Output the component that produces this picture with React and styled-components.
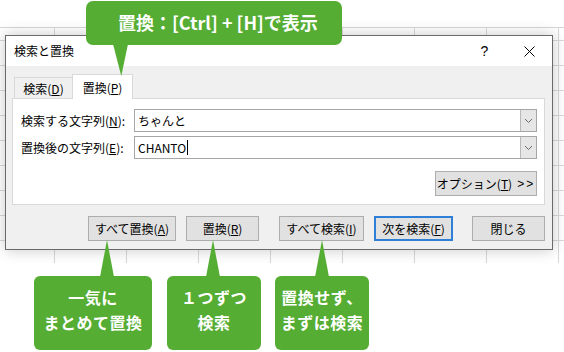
import React from "react";
import styled, { createGlobalStyle } from "styled-components";

const GREEN = "#55ad33";
const UI_FONT = `"Noto Sans CJK JP", "Noto Sans", sans-serif`;

const Global = createGlobalStyle`
  html, body { margin: 0; padding: 0; background: #fff; }
  body { font-family: ${UI_FONT}; }
  * { box-sizing: border-box; }
`;

const Stage = styled.div`
  position: relative;
  width: 564px;
  height: 352px;
  overflow: hidden;
  background: #fff;
  display: flex;
  flex-direction: column;
`;

const Sheet = styled.div`
  margin-top: 27px;
  height: 236px;
  border-top: 1px solid #d6d6d6;
  background-color: #fff;
  background-image:
    linear-gradient(to right, #d9d9d9 1px, transparent 1px),
    linear-gradient(to bottom, #d9d9d9 1px, transparent 1px);
  background-size: 72px 25px, 72px 25px;
  background-position: 54px 12px, 54px 12px;
  padding: 7px 0 0 5px;
`;

const Dialog = styled.div`
  width: 548px;
  height: 215px;
  border: 1px solid #6a6a6a;
  background: #f0f0f0;
  box-shadow: 0 0 14px rgba(0, 0, 0, 0.22);
  display: flex;
  flex-direction: column;
  font-family: ${UI_FONT};
  font-size: 12px;
  color: #000;
`;

const TitleBar = styled.div`
  height: 30px;
  background: #fff;
  display: flex;
  align-items: center;
  padding-left: 8px;
`;

const Title = styled.div`
  flex: 1;
  font-size: 12px;
  line-height: 30px;
`;

const TitleButton = styled.div`
  width: 45px;
  height: 30px;
  display: flex;
  align-items: center;
  justify-content: center;
  font-family: "Liberation Sans", sans-serif;
  font-size: 14px;
`;

const Body = styled.div`
  flex: 1;
  padding: 8px 7px 0 6px;
  display: flex;
  flex-direction: column;
`;

const TabRow = styled.div`
  height: 24px;
  display: flex;
  align-items: flex-end;
  padding-left: 2px;
  position: relative;
  z-index: 1;
`;

const Tab = styled.div`
  width: ${(p) => (p.$active ? 61 : 58)}px;
  height: ${(p) => (p.$active ? 25 : 21)}px;
  margin-bottom: ${(p) => (p.$active ? -1 : 0)}px;
  display: flex;
  align-items: center;
  justify-content: center;
  background: ${(p) => (p.$active ? "#fff" : "#f0f0f0")};
  border: 1px solid #d9d9d9;
  border-bottom: none;
  ${(p) => (p.$active ? "" : "border-right: none;")}
  padding-top: ${(p) => (p.$active ? 0 : 1)}px;
`;

const Panel = styled.div`
  height: 107px;
  background: #fff;
  border: 1px solid #d9d9d9;
  padding: 10px 7px 0 8px;
  display: flex;
  flex-direction: column;
`;

const FieldRow = styled.div`
  display: flex;
  align-items: center;
  height: 23px;
  margin-bottom: 4px;
`;

const Label = styled.div`
  width: 113px;
  font-size: 12px;
  white-space: nowrap;
`;

const Combo = styled.div`
  flex: 1;
  height: 23px;
  border: 1px solid #a6a6a6;
  display: flex;
  background: #fff;
`;

const ComboText = styled.div`
  flex: 1;
  padding-left: 3px;
  display: flex;
  align-items: center;
  font-size: 12px;
`;

const Caret = styled.span`
  display: inline-block;
  width: 1px;
  height: 15px;
  background: #000;
  margin-left: 1px;
`;

const ComboButton = styled.div`
  width: 16px;
  background: #e6e6e6;
  border-left: 1px solid #b9b9b9;
  display: flex;
  align-items: center;
  justify-content: center;
`;

const OptionRow = styled.div`
  display: flex;
  justify-content: flex-end;
  margin-top: 8px;
`;

const Arrows = styled.span`
  margin-left: 5px;
  letter-spacing: 2px;
  font-family: "Liberation Sans", sans-serif;
`;

const Button = styled.div`
  width: ${(p) => p.$w}px;
  height: 25px;
  margin-left: ${(p) => p.$ml || 0}px;
  background: #e1e1e1;
  border: ${(p) => (p.$default ? "2px solid #2f7fd6" : "1px solid #adadad")};
  display: flex;
  align-items: center;
  justify-content: center;
  font-size: 12px;
  white-space: nowrap;
`;

const ButtonRow = styled.div`
  display: flex;
  margin-top: 11px;
  padding-left: 76px;
`;

const Callout = styled.div`
  position: absolute;
  left: 86px;
  top: 1px;
  width: 256px;
  height: 44px;
  border-radius: 7px;
  background: ${GREEN};
  color: #fff;
  font-family: ${UI_FONT};
  font-weight: 700;
  font-size: 18px;
  display: flex;
  align-items: center;
  padding-left: 32px;
  padding-bottom: 3px;
  z-index: 5;
  &::after {
    content: "";
    position: absolute;
    left: 27px;
    top: 43px;
    width: 15px;
    height: 32px;
    background: ${GREEN};
    clip-path: polygon(0 0, 100% 0, 55% 100%);
  }
`;

const NoteRow = styled.div`
  display: flex;
  margin-top: 13px;
  padding-left: 34px;
  gap: 15px;
`;

const Note = styled.div`
  position: relative;
  width: ${(p) => p.$w}px;
  height: 74px;
  margin-left: ${(p) => p.$ml || 0}px;
  border-radius: 6px;
  background: ${GREEN};
  color: #fff;
  font-weight: 700;
  font-size: 16px;
  letter-spacing: 0.5px;
  line-height: 25px;
  text-align: center;
  padding-top: 9px;
  z-index: 5;
  &::before {
    content: "";
    position: absolute;
    left: ${(p) => p.$tip}px;
    top: -36px;
    width: 14px;
    height: 37px;
    background: ${GREEN};
    clip-path: polygon(50% 0, 100% 100%, 0 100%);
  }
`;

const Chevron = () => (
  <svg width="9" height="6" viewBox="0 0 9 6">
    <path d="M1 1 L4.5 4.5 L8 1" fill="none" stroke="#6b6b6b" strokeWidth="1" />
  </svg>
);

const CloseIcon = () => (
  <svg width="11" height="11" viewBox="0 0 11 11">
    <path d="M0.5 0.5 L10.5 10.5 M10.5 0.5 L0.5 10.5" stroke="#000" strokeWidth="1" />
  </svg>
);

export default function App() {
  return (
    <>
      <Global />
      <Stage>
        <Callout>置換：[Ctrl] + [H]で表示</Callout>
        <Sheet>
          <Dialog>
            <TitleBar>
              <Title>検索と置換</Title>
              <TitleButton>?</TitleButton>
              <TitleButton>
                <CloseIcon />
              </TitleButton>
            </TitleBar>
            <Body>
              <TabRow>
                <Tab>
                  検索(<u>D</u>)
                </Tab>
                <Tab $active>
                  置換(<u>P</u>)
                </Tab>
              </TabRow>
              <Panel>
                <FieldRow>
                  <Label>
                    検索する文字列(<u>N</u>):
                  </Label>
                  <Combo>
                    <ComboText>ちゃんと</ComboText>
                    <ComboButton>
                      <Chevron />
                    </ComboButton>
                  </Combo>
                </FieldRow>
                <FieldRow>
                  <Label>
                    置換後の文字列(<u>E</u>):
                  </Label>
                  <Combo>
                    <ComboText>
                      CHANTO
                      <Caret />
                    </ComboText>
                    <ComboButton>
                      <Chevron />
                    </ComboButton>
                  </Combo>
                </FieldRow>
                <OptionRow>
                  <Button $w={102}>
                    オプション(<u>T</u>)<Arrows>&gt;&gt;</Arrows>
                  </Button>
                </OptionRow>
              </Panel>
              <ButtonRow>
                <Button $w={88}>
                  すべて置換(<u>A</u>)
                </Button>
                <Button $w={73} $ml={10}>
                  置換(<u>R</u>)
                </Button>
                <Button $w={85} $ml={20}>
                  すべて検索(<u>I</u>)
                </Button>
                <Button $w={79} $ml={10} $default>
                  次を検索(<u>F</u>)
                </Button>
                <Button $w={73} $ml={19}>
                  閉じる
                </Button>
              </ButtonRow>
            </Body>
          </Dialog>
        </Sheet>
        <NoteRow>
          <Note $w={118} $tip={66}>
            一気に
            <br />
            まとめて置換
          </Note>
          <Note $w={94} $tip={39}>
            １つずつ
            <br />
            検索
          </Note>
          <Note $w={94} $tip={40} $ml={-1}>
            置換せず、
            <br />
            まずは検索
          </Note>
        </NoteRow>
      </Stage>
    </>
  );
}
